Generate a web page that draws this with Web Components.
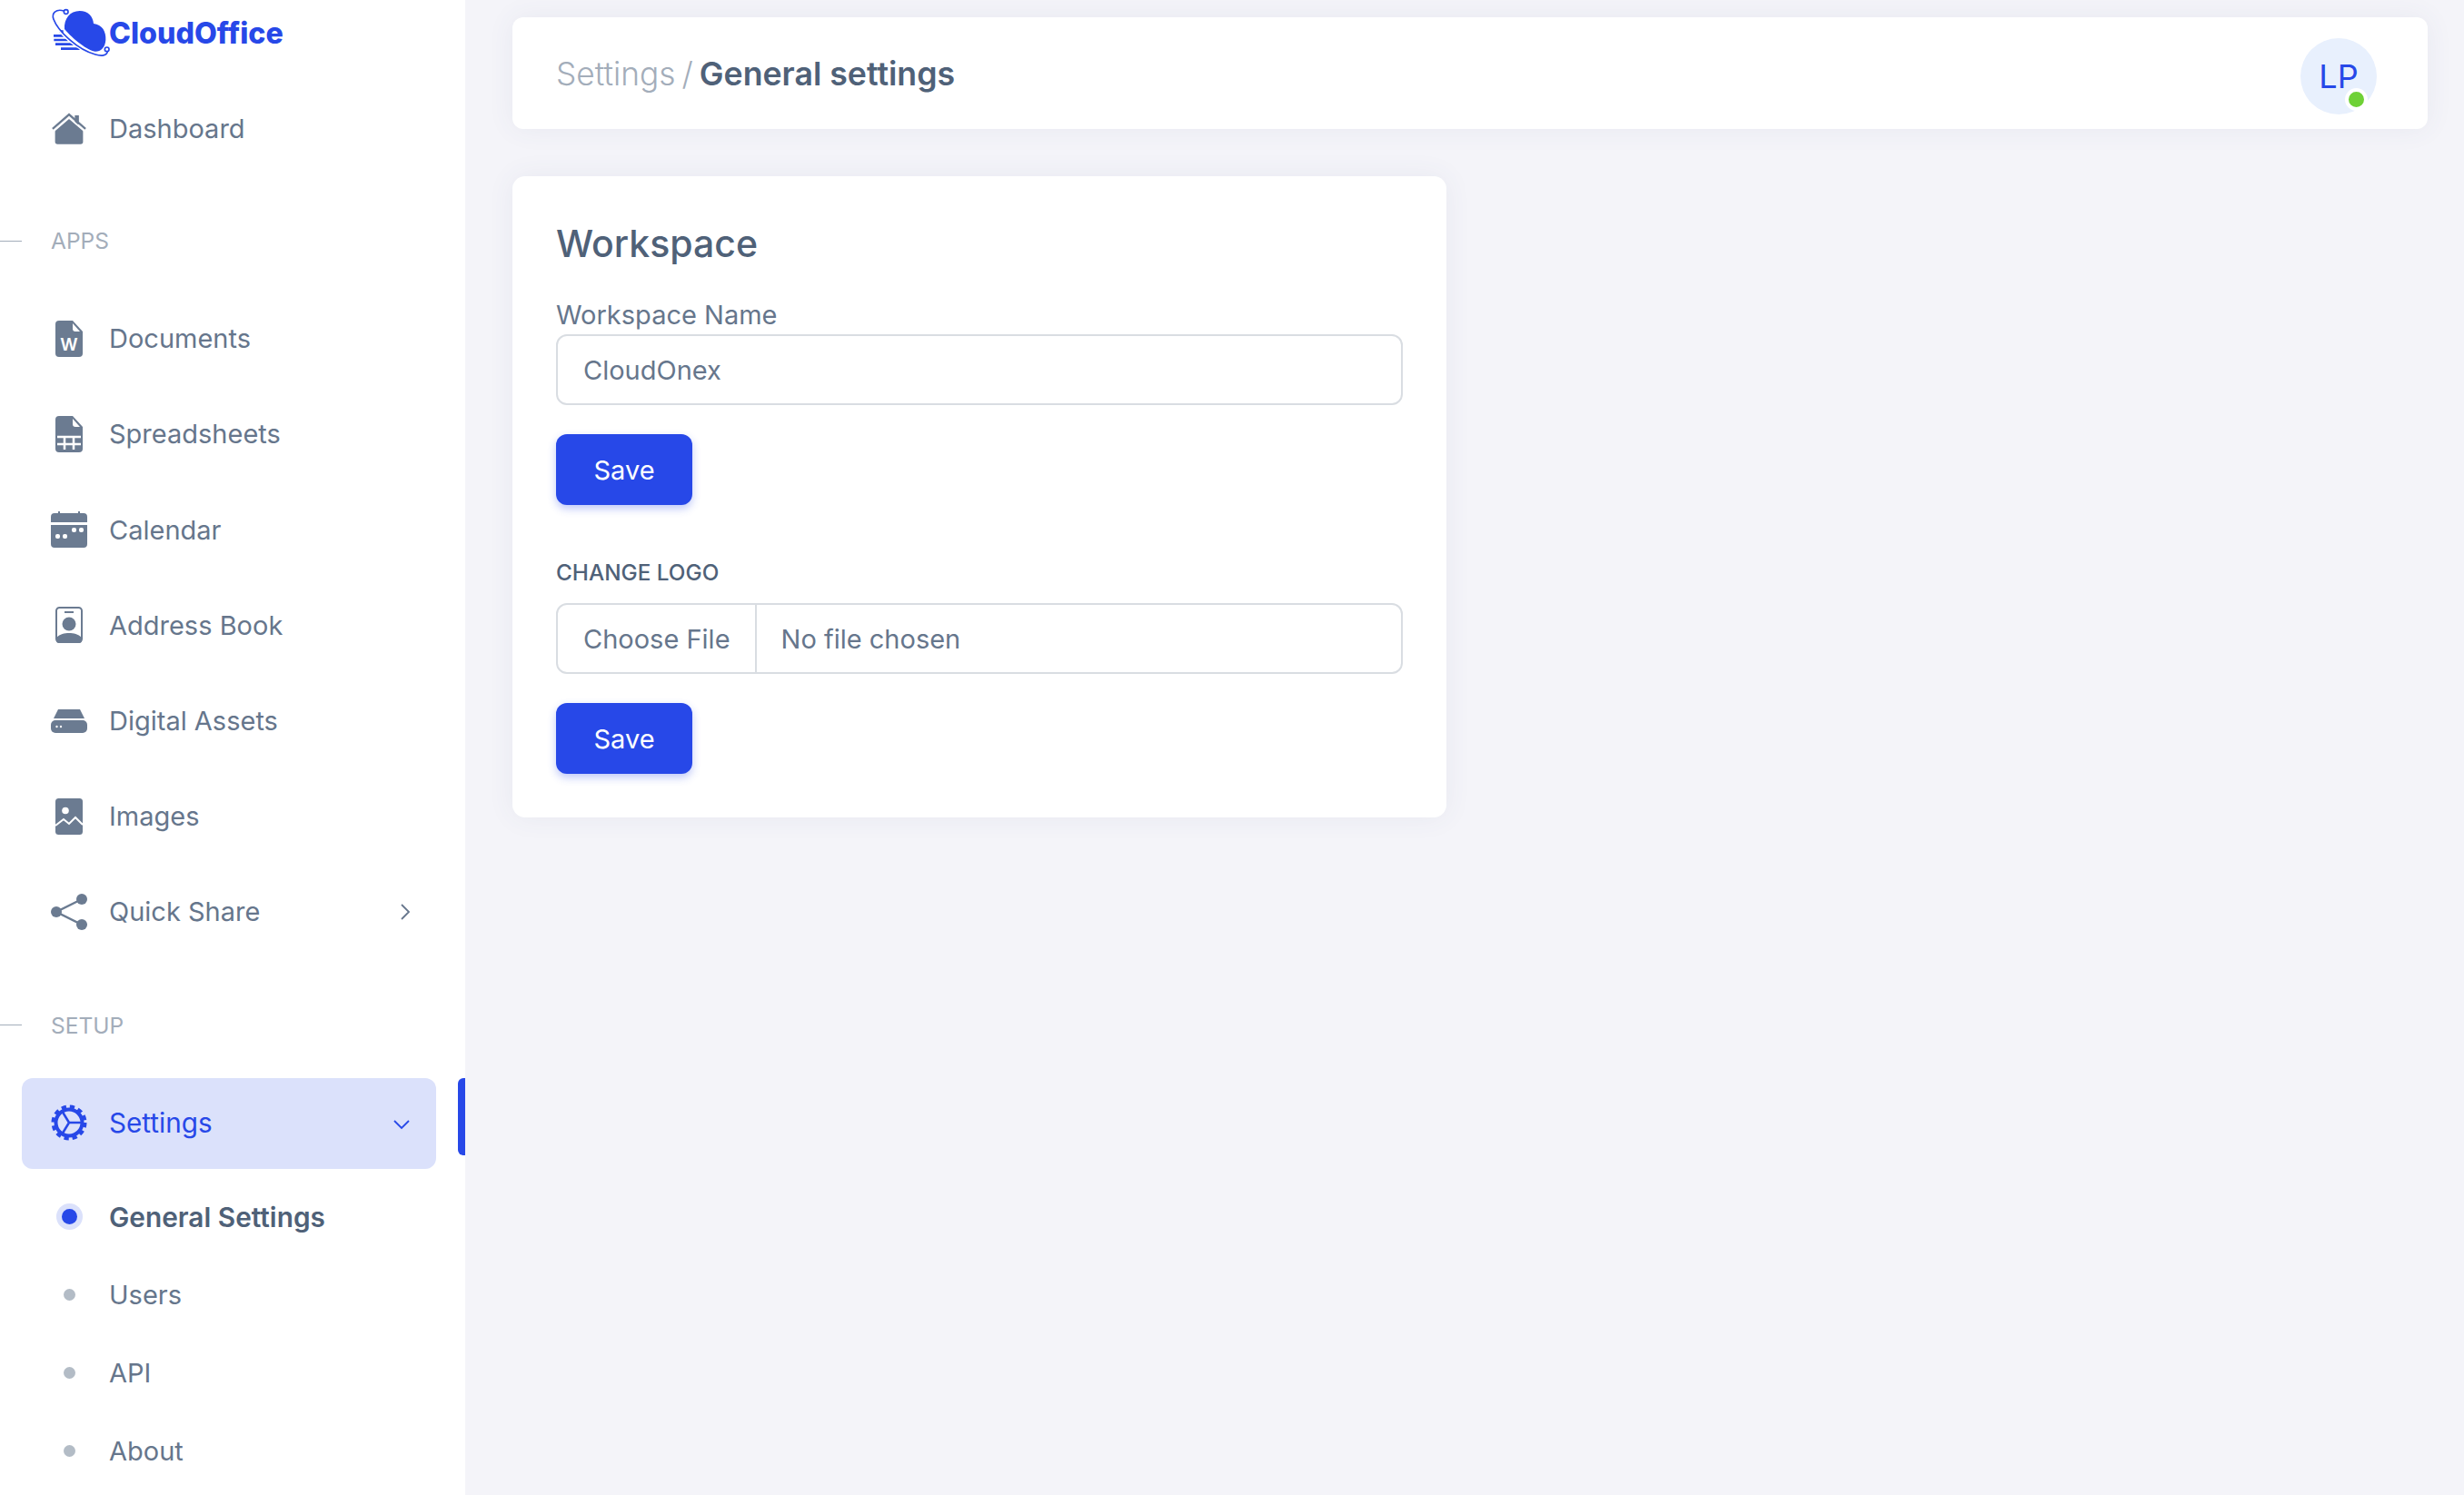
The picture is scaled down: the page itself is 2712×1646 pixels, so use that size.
<!doctype html>
<html lang="en">
<head>
<meta charset="utf-8">
<title>General settings</title>
<style>
  html, body { margin: 0; height: 100%; background: #f4f4f9; }
  body { font-family: Inter, "Liberation Sans", sans-serif; overflow: hidden; }
</style>
</head>
<body>
<cloud-app>
  <side-bar slot="side">
    <brand-logo></brand-logo>
    <nav-item icon="home" style="margin-top:17px">Dashboard</nav-item>
    <nav-heading style="margin:41px 0 25px">APPS</nav-heading>
    <nav-item icon="doc">Documents</nav-item>
    <nav-item icon="sheet">Spreadsheets</nav-item>
    <nav-item icon="calendar">Calendar</nav-item>
    <nav-item icon="contact">Address Book</nav-item>
    <nav-item icon="drive">Digital Assets</nav-item>
    <nav-item icon="image">Images</nav-item>
    <nav-item icon="share" chevron="right">Quick Share</nav-item>
    <nav-heading style="margin:42px 0 28px">SETUP</nav-heading>
    <nav-item icon="gear" chevron="down" active>Settings</nav-item>
    <sub-item active style="margin-top:10px">General Settings</sub-item>
    <sub-item>Users</sub-item>
    <sub-item>API</sub-item>
    <sub-item>About</sub-item>
  </side-bar>
  <top-bar slot="top" parent="Settings" current="General settings">
    <user-avatar initials="LP"></user-avatar>
  </top-bar>
  <workspace-card slot="main" heading="Workspace">
    <text-field label="Workspace Name" value="CloudOnex"></text-field>
    <save-button>Save</save-button>
    <file-field label="CHANGE LOGO" style="margin-top:59px"></file-field>
    <save-button>Save</save-button>
  </workspace-card>
</cloud-app>

<script>
/*
 * Icon drawings, keyed by the name used on nav-item.
 */
const icons = {
  home: `<svg width="38" height="35" viewBox="0 0 42 38" fill="#6b7b91">
      <path d="M4 20 21 5l17 15v15a3 3 0 0 1-3 3H7a3 3 0 0 1-3-3z"/>
      <path d="M1 19.500 21 2l20 17.500" fill="none" stroke="#6b7b91" stroke-width="2.500"/>
      <path d="M28 3h5v11h-5z"/>
      <path d="M2 22.500 21 6l19 16.500" fill="none" stroke="#fff" stroke-width="2"/>
    </svg>`,
  doc: `<svg width="30" height="40" viewBox="0 0 30 40">
      <path fill="#6b7b91" d="M4 0h15l11 12v24a4 4 0 0 1-4 4H4a4 4 0 0 1-4-4V4a4 4 0 0 1 4-4z"/>
      <path fill="#fff" d="M19 3l8 9h-5a3 3 0 0 1-3-3z"/>
      <text x="15" y="33" text-anchor="middle" font-family="Inter, 'Liberation Sans', sans-serif" font-size="19" font-weight="600" fill="#fff">W</text>
    </svg>`,
  sheet: `<svg width="30" height="40" viewBox="0 0 30 40">
      <path fill="#6b7b91" d="M4 0h15l11 12v24a4 4 0 0 1-4 4H4a4 4 0 0 1-4-4V4a4 4 0 0 1 4-4z"/>
      <path fill="#fff" d="M19 3l8 9h-5a3 3 0 0 1-3-3z"/>
      <path fill="none" stroke="#fff" stroke-width="2.500" d="M2 23h26M2 31h26M10 23v14M20 23v14"/>
    </svg>`,
  calendar: `<svg width="40" height="40" viewBox="0 0 40 40">
      <path fill="#6b7b91" d="M4 2h32a4 4 0 0 1 4 4v6H0V6a4 4 0 0 1 4-4zM0 15h40v21a4 4 0 0 1-4 4H4a4 4 0 0 1-4-4z"/>
      <path fill="#6b7b91" d="M8 0h2v4H8zM30 0h2v4h-2z"/>
      <g fill="#fff"><rect x="5" y="25" width="5" height="5" rx="2"/><rect x="13" y="25" width="5" height="5" rx="2"/><rect x="23" y="18" width="5" height="5" rx="2"/><rect x="31" y="18" width="5" height="5" rx="2"/></g>
    </svg>`,
  contact: `<svg width="30" height="40" viewBox="0 0 30 40" fill="#6b7b91">
      <rect x="1" y="1" width="28" height="38" rx="3.500" fill="none" stroke="#6b7b91" stroke-width="2"/>
      <rect x="10" y="5" width="10" height="2"/>
      <circle cx="15" cy="19" r="7.500"/>
      <path d="M1 34c4-4 9-5 14-5s10 1 14 5v3a3 3 0 0 1-3 3H4a3 3 0 0 1-3-3z"/>
    </svg>`,
  drive: `<svg width="40" height="26" viewBox="0 0 40 26" fill="#6b7b91">
      <path d="M8 0h24l5 10H3z"/>
      <rect y="12" width="40" height="14" rx="5"/>
      <g fill="#fff"><circle cx="6.500" cy="19" r="1.200"/><circle cx="11" cy="19" r="1.200"/></g>
    </svg>`,
  image: `<svg width="30" height="40" viewBox="0 0 30 40">
      <rect width="30" height="40" rx="3.500" fill="#6b7b91"/>
      <circle cx="11" cy="13.500" r="3.800" fill="#fff"/>
      <path d="M0 30l9-7 6 5 7-7 8 8" fill="none" stroke="#fff" stroke-width="2"/>
    </svg>`,
  share: `<svg width="40" height="40" viewBox="0 0 40 40" fill="#6b7b91">
      <path d="M34 6 6 20l28 14" fill="none" stroke="#6b7b91" stroke-width="2.500"/>
      <circle cx="34" cy="6" r="6"/><circle cx="6" cy="20" r="6"/><circle cx="34" cy="34" r="6"/>
    </svg>`,
  gear: `<svg width="40" height="40" viewBox="0 0 40 40" fill="none" stroke="#2748e8">
      <circle cx="20" cy="20" r="14.500" stroke-width="4"/>
      <circle cx="20" cy="20" r="17.500" stroke-width="4" stroke-dasharray="5.200 4"/>
      <path d="M20 20h14M20 20l-7-11.500M20 20l-7 11.500" stroke-width="2.500"/>
    </svg>`
}

/*
 * Define template for the page frame.
 */
const appTemplate = document.createElement('template')
appTemplate.innerHTML = `
  <style>
    :host {
      display: grid;
      grid-template-columns: 512px 1fr;
      height: 1646px;
      background: #f4f4f9;
    }
    #content {
      display: flex;
      flex-direction: column;
      gap: 52px;
      padding: 19px 40px 0 52px;
    }
  </style>
  <slot name="side"></slot>
  <div id="content">
    <slot name="top"></slot>
    <slot name="main"></slot>
  </div>
`

customElements.define('cloud-app', class extends HTMLElement {
  constructor () {
    super()
    this.attachShadow({ mode: 'open' }).append(appTemplate.content.cloneNode(true))
  }
})

/*
 * Define template for the sidebar.
 */
const sideTemplate = document.createElement('template')
sideTemplate.innerHTML = `
  <style>
    :host {
      display: flex;
      flex-direction: column;
      background: #fff;
      height: 1646px;
      overflow: hidden;
    }
  </style>
  <slot></slot>
`

customElements.define('side-bar', class extends HTMLElement {
  constructor () {
    super()
    this.attachShadow({ mode: 'open' }).append(sideTemplate.content.cloneNode(true))
  }
})

/*
 * Define template for the logo.
 */
const brandTemplate = document.createElement('template')
brandTemplate.innerHTML = `
  <style>
    :host {
      display: flex;
      align-items: center;
      height: 72px;
      padding-left: 55px;
      font-size: 32.200px;
      font-weight: 800;
      color: #2748e8;
    }
    svg { flex: none; margin-right: -1px; }
  </style>
  <svg width="66" height="60" viewBox="40 20 198 180">
    <path fill="#2748e8" d="M88 98C86 64 106 38 138 38c28 0 44 18 46 42 28 3 42 26 40 54-2 26-16 38-34 38-22 0-76-42-102-74z"/>
    <path fill="none" stroke="#2748e8" stroke-width="8" d="M70 106h14M52 120h38M53 134h52M58 148h62M76 163h62"/>
    <path fill="none" stroke="#fff" stroke-width="7" d="M50 72c16 38 80 96 140 112"/>
    <path fill="none" stroke="#2748e8" stroke-width="5" d="M86 38C60 30 44 46 52 66c14 38 78 100 138 116 20 6 38 4 40-10"/>
    <circle cx="93" cy="41" r="7" fill="#fff" stroke="#2748e8" stroke-width="5"/>
    <circle cx="228" cy="165" r="7" fill="#fff" stroke="#2748e8" stroke-width="5"/>
  </svg>
  <span>CloudOffice</span>
`

customElements.define('brand-logo', class extends HTMLElement {
  constructor () {
    super()
    this.attachShadow({ mode: 'open' }).append(brandTemplate.content.cloneNode(true))
  }
})

/*
 * Define template for a sidebar row.
 */
const itemTemplate = document.createElement('template')
itemTemplate.innerHTML = `
  <style>
    :host {
      display: flex;
      align-items: center;
      position: relative;
      height: 105.200px;
      font-size: 29px;
      color: #66768c;
    }
    #icon {
      display: flex;
      justify-content: center;
      flex: none;
      width: 42px;
      margin: 0 23px 0 55px;
    }
    #chevron { margin-left: auto; margin-right: 60px; display: flex; }
    :host([active]) {
      box-sizing: border-box;
      height: 100px;
      margin: 0 32px 0 24px;
      padding-bottom: 2px;
      border-radius: 12px;
      background: #dbe1fb;
      font-size: 29.700px;
      color: #2748e8;
    }
    :host([active]) #icon { margin-left: 31px; }
    :host([active]) #chevron { margin-right: 28px; padding-top: 4px; }
    #bar {
      display: none;
      position: absolute;
      top: 0;
      right: -32px;
      width: 8px;
      height: 85px;
      border-radius: 6px 0 0 6px;
      background: #2748e8;
    }
    :host([active]) #bar { display: block; }
  </style>
  <span id="icon"></span>
  <slot></slot>
  <span id="chevron"></span>
  <span id="bar"></span>
`

customElements.define('nav-item', class extends HTMLElement {
  constructor () {
    super()
    this.attachShadow({ mode: 'open' }).append(itemTemplate.content.cloneNode(true))
  }

  /**
   * Called after the element is inserted into the DOM.
   */
  connectedCallback () {
    this.shadowRoot.querySelector('#icon').innerHTML = icons[this.getAttribute('icon')] ?? ''

    const chevron = this.getAttribute('chevron')
    if (chevron === 'right') {
      this.shadowRoot.querySelector('#chevron').innerHTML = '<svg width="12" height="20" viewBox="0 0 12 20" fill="none" stroke="#66768c" stroke-width="1.800"><path d="M2 2l8 8-8 8"/></svg>'
    } else if (chevron === 'down') {
      this.shadowRoot.querySelector('#chevron').innerHTML = '<svg width="20" height="12" viewBox="0 0 20 12" fill="none" stroke="#2748e8" stroke-width="1.800"><path d="M2 2l8 8 8-8"/></svg>'
    }
  }
})

/*
 * Define template for a sidebar section heading.
 */
const headingTemplate = document.createElement('template')
headingTemplate.innerHTML = `
  <style>
    :host {
      display: flex;
      align-items: center;
      height: 60px;
      font-size: 24.500px;
      color: #a3adba;
    }
    i {
      width: 24px;
      height: 1px;
      margin-right: 32px;
      background: #a3adba;
    }
  </style>
  <i></i><slot></slot>
`

customElements.define('nav-heading', class extends HTMLElement {
  constructor () {
    super()
    this.attachShadow({ mode: 'open' }).append(headingTemplate.content.cloneNode(true))
  }
})

/*
 * Define template for a nested sidebar row.
 */
const subTemplate = document.createElement('template')
subTemplate.innerHTML = `
  <style>
    :host {
      display: flex;
      align-items: center;
      height: 86px;
      font-size: 29px;
      color: #66768c;
    }
    #dot-box {
      display: flex;
      justify-content: center;
      flex: none;
      width: 42px;
      margin: 0 23px 0 55px;
    }
    #dot {
      width: 13px;
      height: 13px;
      border-radius: 50%;
      background: #b3bcc6;
    }
    :host([active]) { font-size: 29.800px; font-weight: 600; color: #4f6178; }
    :host([active]) #dot {
      width: 17px;
      height: 17px;
      background: #2748e8;
      box-shadow: 0 0 0 6px #dbe1fb;
    }
  </style>
  <span id="dot-box"><span id="dot"></span></span>
  <slot></slot>
`

customElements.define('sub-item', class extends HTMLElement {
  constructor () {
    super()
    this.attachShadow({ mode: 'open' }).append(subTemplate.content.cloneNode(true))
  }
})

/*
 * Define template for the breadcrumb bar.
 */
const topTemplate = document.createElement('template')
topTemplate.innerHTML = `
  <style>
    :host {
      display: flex;
      align-items: center;
      justify-content: space-between;
      box-sizing: border-box;
      height: 123px;
      padding: 0 56px 0 48px;
      border-radius: 12px;
      background: #fff;
      box-shadow: 0 0 30px rgba(76, 87, 125, 0.07);
      font-size: 35.300px;
    }
    #parent, #sep { font-weight: 300; color: #a3adba; }
    #sep { margin: 0 7px; }
    #current { font-size: 35.700px; font-weight: 600; color: #4f6178; }
  </style>
  <div><span id="parent"></span><span id="sep">/</span><span id="current"></span></div>
  <slot></slot>
`

customElements.define('top-bar', class extends HTMLElement {
  constructor () {
    super()
    this.attachShadow({ mode: 'open' }).append(topTemplate.content.cloneNode(true))
  }

  /**
   * Called after the element is inserted into the DOM.
   */
  connectedCallback () {
    this.shadowRoot.querySelector('#parent').textContent = this.getAttribute('parent')
    this.shadowRoot.querySelector('#current').textContent = this.getAttribute('current')
  }
})

/*
 * Define template for the user avatar.
 */
const avatarTemplate = document.createElement('template')
avatarTemplate.innerHTML = `
  <style>
    :host {
      display: flex;
      align-items: center;
      justify-content: center;
      position: relative;
      width: 84px;
      height: 84px;
      margin-top: 6px;
      border-radius: 50%;
      background: #e8f0fd;
      font-size: 36px;
      color: #2748e8;
    }
    i {
      position: absolute;
      right: 10px;
      bottom: 4px;
      width: 17px;
      height: 17px;
      border: 4px solid #fff;
      border-radius: 50%;
      background: #6fd136;
    }
  </style>
  <span id="initials"></span><i></i>
`

customElements.define('user-avatar', class extends HTMLElement {
  constructor () {
    super()
    this.attachShadow({ mode: 'open' }).append(avatarTemplate.content.cloneNode(true))
  }

  /**
   * Called after the element is inserted into the DOM.
   */
  connectedCallback () {
    this.shadowRoot.querySelector('#initials').textContent = this.getAttribute('initials')
  }
})

/*
 * Define template for the workspace card.
 */
const cardTemplate = document.createElement('template')
cardTemplate.innerHTML = `
  <style>
    :host {
      display: flex;
      flex-direction: column;
      box-sizing: border-box;
      width: 1028px;
      height: 706px;
      padding: 46px 48px 0;
      border-radius: 14px;
      background: #fff;
      box-shadow: 0 0 30px rgba(76, 87, 125, 0.07);
    }
    h2 {
      margin: 0 0 29px;
      font-size: 41px;
      line-height: 56px;
      font-weight: 500;
      color: #4f6178;
    }
  </style>
  <h2></h2>
  <slot></slot>
`

customElements.define('workspace-card', class extends HTMLElement {
  constructor () {
    super()
    this.attachShadow({ mode: 'open' }).append(cardTemplate.content.cloneNode(true))
  }

  /**
   * Called after the element is inserted into the DOM.
   */
  connectedCallback () {
    this.shadowRoot.querySelector('h2').textContent = this.getAttribute('heading')
  }
})

/*
 * Define template for the text field.
 */
const textTemplate = document.createElement('template')
textTemplate.innerHTML = `
  <style>
    :host { display: block; }
    label {
      display: block;
      font-size: 29px;
      line-height: 43px;
      color: #66768c;
    }
    input {
      display: block;
      box-sizing: border-box;
      width: 100%;
      height: 78px;
      margin: 0;
      padding: 0 28px;
      border: 2px solid #d9dde2;
      border-radius: 12px;
      outline: none;
      background: #fff;
      font: inherit;
      font-size: 29px;
      color: #66768c;
    }
  </style>
  <label for="field"></label>
  <input id="field" type="text">
`

customElements.define('text-field', class extends HTMLElement {
  constructor () {
    super()
    this.attachShadow({ mode: 'open' }).append(textTemplate.content.cloneNode(true))
  }

  /**
   * Called after the element is inserted into the DOM.
   */
  connectedCallback () {
    this.shadowRoot.querySelector('label').textContent = this.getAttribute('label')
    this.shadowRoot.querySelector('input').setAttribute('value', this.getAttribute('value'))
  }
})

/*
 * Define template for the file field.
 */
const fileTemplate = document.createElement('template')
fileTemplate.innerHTML = `
  <style>
    :host { display: block; }
    #label {
      font-size: 24.300px;
      line-height: 30px;
      font-weight: 500;
      color: #4f6178;
      margin-bottom: 19px;
    }
    #box {
      display: flex;
      align-items: center;
      box-sizing: border-box;
      height: 78px;
      border: 2px solid #d9dde2;
      border-radius: 12px;
      font-size: 29px;
      color: #66768c;
    }
    #button {
      display: flex;
      align-items: center;
      height: 100%;
      padding: 0 27px 0 28px;
      border-right: 2px solid #d9dde2;
    }
    #name { padding-left: 27px; }
  </style>
  <div id="label"></div>
  <div id="box">
    <div id="button">Choose File</div>
    <div id="name">No file chosen</div>
  </div>
`

customElements.define('file-field', class extends HTMLElement {
  constructor () {
    super()
    this.attachShadow({ mode: 'open' }).append(fileTemplate.content.cloneNode(true))
  }

  /**
   * Called after the element is inserted into the DOM.
   */
  connectedCallback () {
    this.shadowRoot.querySelector('#label').textContent = this.getAttribute('label')
  }
})

/*
 * Define template for the save button.
 */
const buttonTemplate = document.createElement('template')
buttonTemplate.innerHTML = `
  <style>
    :host {
      display: flex;
      align-items: center;
      justify-content: center;
      align-self: flex-start;
      box-sizing: border-box;
      width: 150px;
      height: 78px;
      margin-top: 32px;
      border-radius: 12px;
      background: #2748e8;
      box-shadow: 0 4px 10px rgba(39, 72, 232, 0.3);
      font-size: 29px;
      color: #fff;
      cursor: pointer;
    }
  </style>
  <slot></slot>
`

customElements.define('save-button', class extends HTMLElement {
  constructor () {
    super()
    this.attachShadow({ mode: 'open' }).append(buttonTemplate.content.cloneNode(true))
  }
})
</script>
</body>
</html>
